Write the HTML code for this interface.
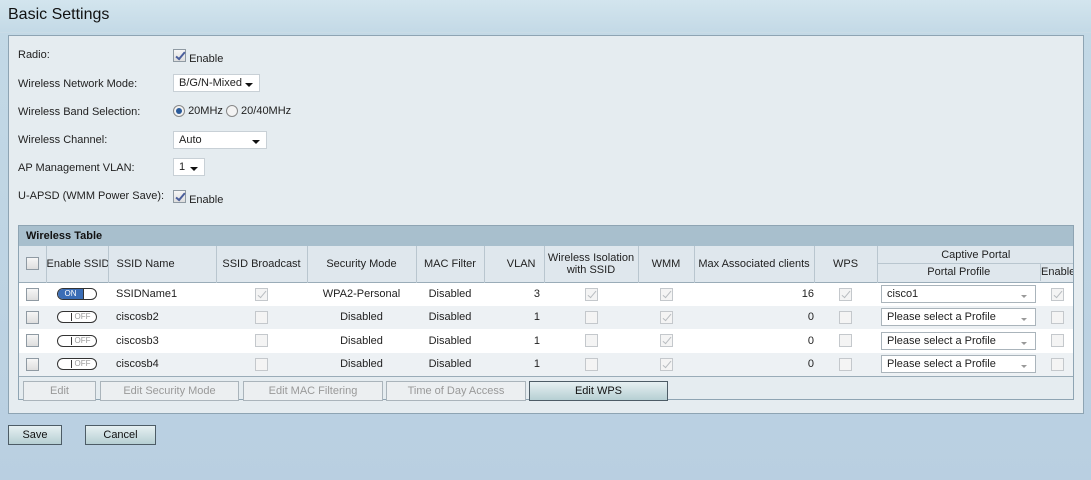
<!DOCTYPE html>
<html><head><style>
*{box-sizing:border-box}
body{margin:0;width:1091px;height:480px;overflow:hidden;font-family:"Liberation Sans",Arial,sans-serif;font-size:11px;color:#222;background:linear-gradient(#d3e5ee 0,#c3d9e6 33px,#b9cfe1 100%);position:relative}
.abs{position:absolute}
h1{position:absolute;left:8px;top:6px;margin:0;font-weight:normal;font-size:16px;color:#111}
.topline{position:absolute;left:0;top:32px;width:1091px;height:1px;background:#c9dbe6}
.panel{left:8px;top:35px;width:1076px;height:379px;background:#e5ecf0;border:1px solid #8ea4b3}
.lbl{position:absolute;left:18px;font-size:11px}
.cb{display:inline-block;width:13px;height:13px;border:1px solid #8f9aa3;background:linear-gradient(#f6f6f6,#dedede);vertical-align:middle;position:relative}
.cb.chk::after{content:"";position:absolute;left:4px;top:0px;width:3px;height:8px;border:solid #4b5f9c;border-width:0 2px 2px 0;transform:rotate(40deg)}
.cb.dis{background:#f4f4f4;border-color:#c4c8cc}
.cb.dis.chk::after{border-color:#b8bcc0;border-width:0 1px 1px 0}
.sel{position:absolute;background:#fff;border:1px solid #c8d0d6;height:18px;padding:2px 5px;font-size:11px}
.sel::after{content:"";position:absolute;right:6px;top:8px;border:4px solid transparent;border-top:4px solid #111;border-bottom:0}
.radio{display:inline-block;width:12px;height:12px;border-radius:50%;border:1px solid #888;background:#f3f3f3;vertical-align:middle;position:relative}
.radio.on::after{content:"";position:absolute;left:2px;top:2px;width:6px;height:6px;border-radius:50%;background:#2a5a9a}
.wt{left:18px;top:225px;width:1056px;height:175px;border:1px solid #8ea4b3;background:#e5ecf0;overflow:hidden}
.wth{height:20px;background:#a8bfcd;font-weight:bold;padding:4px 7px;font-size:11px;color:#111}
table{border-collapse:collapse;table-layout:fixed;width:1055px;font-size:11px}
th{font-weight:normal;background:#dfe7ed;border-left:1px solid #b9c6cf;padding:0;height:36px;line-height:12px;white-space:nowrap;overflow:hidden}
th:first-child{border-left:0}
td{padding:0;height:23.5px;text-align:center;vertical-align:middle;white-space:nowrap}
tr.w td{background:#fff}tr.g td{background:#edf1f4}
tbody tr:first-child td{border-top:1px solid #9aacb8}
tbody tr:last-child td{border-bottom:1px solid #9aacb8}
.tog{display:inline-block;width:40px;height:12px;border-radius:6px;border:1px solid #333;background:#fff;vertical-align:middle;position:relative;font-size:8px;line-height:10px}
.tog.on span{position:absolute;left:0;top:0;width:26px;height:10px;border-radius:5px 0 0 5px;background:#3a6db6;color:#fff;border-right:1px solid #333}
.tog.off span{position:absolute;right:3px;top:1px;width:22px;height:8px;border-left:1px solid #333;color:#999;line-height:8px}
.ps{position:relative;display:inline-block;width:155px;height:18px;border:1px solid #aab4bb;background:#fff;text-align:left;padding:2px 5px;vertical-align:middle}
.ps::after{content:"";position:absolute;right:8px;top:9px;border:3px solid transparent;border-top:3px solid #999;border-bottom:0}
.btn{position:absolute;height:20px;border:1px solid #aab4bb;background:#eceff1;color:#999;text-align:center;line-height:18px;font-size:11px}
.btn.a{border:1px solid #4d5c66;background:linear-gradient(#e6f0f2,#b6cfd3);color:#111}
</style></head><body>
<h1>Basic Settings</h1>
<div class="topline"></div>
<div class="abs panel"></div>
<div class="lbl" style="top:49px">Radio:</div>
<div class="abs" style="left:173px;top:49px"><span class="cb chk"></span> <span style="vertical-align:middle;position:relative;top:3px">Enable</span></div>
<div class="lbl" style="top:78px">Wireless Network Mode:</div>
<div class="sel" style="left:173px;top:74px;width:87px">B/G/N-Mixed</div>
<div class="lbl" style="top:106px">Wireless Band Selection:</div>
<div class="abs" style="left:173px;top:105px"><span class="radio on"></span> <span style="vertical-align:middle">20MHz</span> <span class="radio"></span> <span style="vertical-align:middle">20/40MHz</span></div>
<div class="lbl" style="top:134px">Wireless Channel:</div>
<div class="sel" style="left:173px;top:131px;width:94px">Auto</div>
<div class="lbl" style="top:162px">AP Management VLAN:</div>
<div class="sel" style="left:173px;top:158px;width:32px">1</div>
<div class="lbl" style="top:190px">U-APSD (WMM Power Save):</div>
<div class="abs" style="left:173px;top:190px"><span class="cb chk"></span> <span style="vertical-align:middle;position:relative;top:3px">Enable</span></div>

<div class="abs wt">
<div class="wth">Wireless Table</div>
<table>
<colgroup><col style="width:27px"><col style="width:62px"><col style="width:108px"><col style="width:91px"><col style="width:109px"><col style="width:68px"><col style="width:60px"><col style="width:94px"><col style="width:56px"><col style="width:120px"><col style="width:63px"><col style="width:163px"><col style="width:34px"></colgroup>
<thead>
<tr><th><span class="cb"></span></th><th>Enable SSID</th><th style="text-align:left;padding-left:8px">SSID Name</th><th>SSID Broadcast</th><th>Security Mode</th><th>MAC Filter</th><th style="text-align:right;padding-right:8px">VLAN</th><th>Wireless Isolation<br>with SSID</th><th>WMM</th><th>Max Associated clients</th><th>WPS</th>
<th colspan="2" style="padding:0"><div style="height:18px;line-height:18px;border-bottom:1px solid #b9c6cf">Captive Portal</div><div style="display:flex;height:17px;line-height:17px"><div style="width:163px">Portal Profile</div><div style="width:34px;border-left:1px solid #b9c6cf">Enable</div></div></th></tr>
</thead>
<tbody>
<tr class="w"><td><span class="cb"></span></td><td><span class="tog on"><span>ON</span></span></td><td style="text-align:left;padding-left:8px">SSIDName1</td><td><span class="cb dis chk"></span></td><td>WPA2-Personal</td><td>Disabled</td><td style="text-align:right;padding-right:4px">3</td><td><span class="cb dis chk"></span></td><td><span class="cb dis chk"></span></td><td style="text-align:right;padding-right:0">16</td><td><span class="cb dis chk"></span></td><td><span class="ps">cisco1</span></td><td><span class="cb dis chk"></span></td></tr>
<tr class="g"><td><span class="cb"></span></td><td><span class="tog off"><span>OFF</span></span></td><td style="text-align:left;padding-left:8px">ciscosb2</td><td><span class="cb dis"></span></td><td>Disabled</td><td>Disabled</td><td style="text-align:right;padding-right:4px">1</td><td><span class="cb dis"></span></td><td><span class="cb dis chk"></span></td><td style="text-align:right">0</td><td><span class="cb dis"></span></td><td><span class="ps">Please select a Profile</span></td><td><span class="cb dis"></span></td></tr>
<tr class="w"><td><span class="cb"></span></td><td><span class="tog off"><span>OFF</span></span></td><td style="text-align:left;padding-left:8px">ciscosb3</td><td><span class="cb dis"></span></td><td>Disabled</td><td>Disabled</td><td style="text-align:right;padding-right:4px">1</td><td><span class="cb dis"></span></td><td><span class="cb dis chk"></span></td><td style="text-align:right">0</td><td><span class="cb dis"></span></td><td><span class="ps">Please select a Profile</span></td><td><span class="cb dis"></span></td></tr>
<tr class="g"><td><span class="cb"></span></td><td><span class="tog off"><span>OFF</span></span></td><td style="text-align:left;padding-left:8px">ciscosb4</td><td><span class="cb dis"></span></td><td>Disabled</td><td>Disabled</td><td style="text-align:right;padding-right:4px">1</td><td><span class="cb dis"></span></td><td><span class="cb dis chk"></span></td><td style="text-align:right">0</td><td><span class="cb dis"></span></td><td><span class="ps">Please select a Profile</span></td><td><span class="cb dis"></span></td></tr>
</tbody></table>
</div>
<div class="btn" style="left:23px;top:381px;width:73px">Edit</div>
<div class="btn" style="left:100px;top:381px;width:139px">Edit Security Mode</div>
<div class="btn" style="left:243px;top:381px;width:140px">Edit MAC Filtering</div>
<div class="btn" style="left:386px;top:381px;width:140px">Time of Day Access</div>
<div class="btn a" style="left:529px;top:381px;width:139px">Edit WPS</div>
<div class="btn a" style="left:8px;top:425px;width:54px">Save</div>
<div class="btn a" style="left:85px;top:425px;width:71px">Cancel</div>
</body></html>
